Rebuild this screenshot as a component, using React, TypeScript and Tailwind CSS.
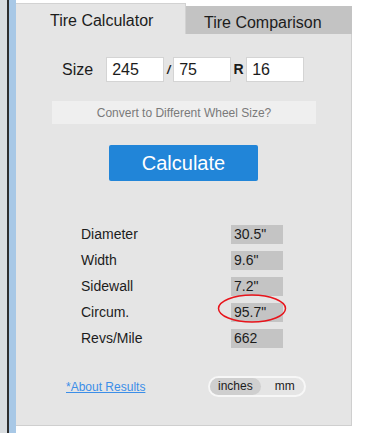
import { useState } from 'react'

const results = [
  { label: 'Diameter', value: '30.5"' },
  { label: 'Width', value: '9.6"' },
  { label: 'Sidewall', value: '7.2"' },
  { label: 'Circum.', value: '95.7"', mark: true },
  { label: 'Revs/Mile', value: '662' },
]

const App = () => {
  const [unit, setUnit] = useState('inches')

  return (
    <div className="flex w-[365px] h-[433px] bg-white overflow-hidden font-['Liberation_Sans',Arial,sans-serif] text-[#1c1c1c]">
      {/* window edge on the left */}
      <div className="w-[7px] bg-[#d9dde0]" />
      <div className="w-[2px] bg-[#2e2e2e]" />
      <div className="w-[7px] bg-[#a8c8e6]" />

      <div className="flex flex-col w-[336px]">
        {/* tabs */}
        <div className="flex items-end h-[34px] pt-[3px]">
          <div className="w-[170px] h-[31px] bg-[#e5e5e5] border-t border-r border-[#d2d2d2] text-[16px] pl-[34px] pt-[5px]">
            Tire Calculator
          </div>
          <div className="flex-1 h-[28px] bg-[#c3c3c3] text-[16px] pl-[18px] pt-[5px]">
            Tire Comparison
          </div>
        </div>

        {/* panel */}
        <div className="flex flex-col h-[392px] bg-[#e5e5e5] border-r border-b border-[#cfcfcf]">
          <div className="flex items-center h-[25px] mt-[23px] pl-[46px]">
            <span className="text-[16px] mr-[13px]">Size</span>
            <div className="w-[58px] h-[25px] bg-white border border-[#d4d4d4] text-[16px] pl-[5px] leading-[23px]">245</div>
            <span className="w-[9px] text-center text-[12px] font-bold italic">/</span>
            <div className="w-[58px] h-[25px] bg-white border border-[#d4d4d4] text-[16px] pl-[5px] leading-[23px]">75</div>
            <span className="w-[15px] text-center text-[14px] font-bold">R</span>
            <div className="w-[58px] h-[25px] bg-white border border-[#d4d4d4] text-[16px] pl-[5px] leading-[23px]">16</div>
          </div>

          <div className="mt-[19px] ml-[36px] w-[264px] h-[23px] bg-[#efefef] text-[12px] text-[#7a7a7a] flex items-center justify-center">
            Convert to Different Wheel Size?
          </div>

          <button className="mt-[21px] ml-[93px] w-[149px] h-[36px] rounded-[2px] bg-[#2185d8] text-white text-[20px]">
            Calculate
          </button>

          <div className="flex flex-col gap-[7px] mt-[44px] pl-[65px]">
            {results.map((r) => (
              <div key={r.label} className="flex items-center h-[19px]">
                <span className="w-[150px] text-[14px]">{r.label}</span>
                <div className="relative w-[52px] h-[19px] bg-[#c4c4c4] text-[14px] leading-[19px] pl-[3px]">
                  {r.value}
                  {r.mark && (
                    <svg className="absolute left-[-14px] top-[-10px]" width="70" height="31" viewBox="0 0 70 31">
                      <ellipse cx="35" cy="15.5" rx="33.5" ry="13.5" fill="none" stroke="#e8141b" strokeWidth="1.5" />
                    </svg>
                  )}
                </div>
              </div>
            ))}
          </div>

          <div className="flex items-center mt-[28px] pl-[50px]">
            <a href="#" className="text-[12px] text-[#3b8ee8] underline w-[142px]">*About Results</a>
            <div className="flex items-center h-[21px] rounded-full border-2 border-[#f7f7f7] bg-[#e5e5e5] text-[12px]">
              {['inches', 'mm'].map((u) => (
                <span
                  key={u}
                  onClick={() => setUnit(u)}
                  className={
                    u === 'inches'
                      ? unit === u
                        ? 'h-[17px] leading-[17px] pl-[8px] pr-[8px] rounded-full bg-[#cfcfcf]'
                        : 'h-[17px] leading-[17px] pl-[8px] pr-[8px] rounded-full'
                      : unit === u
                        ? 'h-[17px] leading-[17px] pl-[14px] pr-[9px] rounded-full bg-[#cfcfcf]'
                        : 'h-[17px] leading-[17px] pl-[14px] pr-[9px] rounded-full'
                  }
                >
                  {u}
                </span>
              ))}
            </div>
          </div>
        </div>
      </div>
    </div>
  )
}

export default App
